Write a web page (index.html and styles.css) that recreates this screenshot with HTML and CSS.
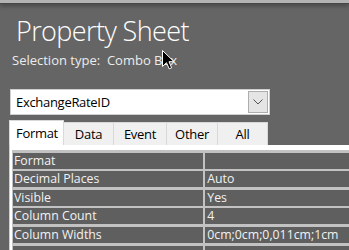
FILE: index.html
```html
<!DOCTYPE html>
<html>
<head>
<meta charset="utf-8">
<link rel="stylesheet" href="styles.css">
</head>
<body>
<div class="topbar"></div>
<header class="head">
  <h1 class="title">Property Sheet</h1>
  <p class="seltype">Selection type:&nbsp; Combo Box</p>
  <svg class="cursor" width="13" height="20" viewBox="0 0 13 20"><path d="M0.5 0.5 L0.5 16.5 L4.5 12.7 L7.2 18.8 L9.6 17.8 L7 11.7 L12 11.7 Z" fill="#000" stroke="#fff" stroke-width="1" stroke-linejoin="miter"/></svg>
</header>
<div class="combo">
  <span class="combo-text">ExchangeRateID</span>
  <span class="combo-btn"><svg width="10" height="6" viewBox="0 0 10 6"><path d="M0.5 0.5 L5 5 L9.5 0.5" fill="none" stroke="#555" stroke-width="1"/></svg></span>
</div>
<nav class="tabs">
  <span class="tab tab-active tab-format">Format</span>
  <span class="tab tab-data">Data</span>
  <span class="tab tab-event">Event</span>
  <span class="tab tab-other">Other</span>
  <span class="tab tab-all">All</span>
</nav>
<section class="panel">
  <div class="grid">
    <div class="cell">Format</div><div class="cell val"></div>
    <div class="cell">Decimal Places</div><div class="cell val">Auto</div>
    <div class="cell">Visible</div><div class="cell val">Yes</div>
    <div class="cell">Column Count</div><div class="cell val">4</div>
    <div class="cell">Column Widths</div><div class="cell val">0cm;0cm;0,011cm;1cm</div>
    <div class="cell"></div><div class="cell val"></div>
  </div>
</section>
</body>
</html>
```
FILE: styles.css
```css
html, body {
  margin: 0;
  padding: 0;
}
body {
  width: 349px;
  height: 250px;
  overflow: hidden;
  background: #656565;
  font-family: "Open Sans", "Noto Sans", sans-serif;
}
.topbar {
  height: 3px;
  background: #b3b3b3;
  border-bottom: 1px solid #474747;
  box-shadow: 0 2px 4px rgba(0,0,0,0.35);
}
.head {
  position: relative;
  padding-top: 11px;
}
.title {
  margin: 0 0 0 16px;
  font-size: 27px;
  font-weight: 300;
  line-height: 32px;
  color: #ffffff;
  letter-spacing: -0.6px;
}
.seltype {
  margin: 5px 0 0 12px;
  font-size: 13px;
  line-height: 16px;
  color: #ececec;
}
.cursor {
  position: absolute;
  left: 162px;
  top: 46px;
}
.combo {
  margin: 21px 0 0 10px;
  width: 260px;
  height: 26px;
  box-sizing: border-box;
  border: 1px solid #cfcfcf;
  background: #fff;
  padding: 1px;
  display: flex;
  align-items: center;
}
.combo-text {
  flex: 1;
  padding-left: 4px;
  font-size: 13px;
  color: #000;
  letter-spacing: -0.3px;
}
.combo-btn {
  width: 20px;
  height: 22px;
  box-sizing: border-box;
  border: 1px solid #adadad;
  background: #e5e5e5;
  display: flex;
  align-items: center;
  justify-content: center;
}
.tabs {
  margin: 5px 0 0 9px;
  height: 25px;
  display: flex;
  align-items: flex-end;
}
.tab {
  box-sizing: border-box;
  height: 23px;
  background: #f0f0f0;
  border: 1px solid #d9d9d9;
  border-bottom: none;
  border-left: none;
  font-size: 13px;
  color: #000;
  display: flex;
  align-items: center;
  justify-content: center;
  letter-spacing: -0.3px;
}
.tab-active {
  height: 25px;
  background: #fff;
  border: 1px solid #d9d9d9;
  border-bottom: none;
  justify-content: flex-start;
  padding-left: 6px;
}
.tab-format { width: 55px; }
.tab-data { width: 50px; }
.tab-event { width: 53px; }
.tab-other { width: 51px; }
.tab-all { width: 50px; }
.panel {
  margin-left: 9px;
  background: #fff;
  border-left: 1px solid #cfcfcf;
  padding: 5px 0 0 2px;
  height: 120px;
}
.grid {
  display: grid;
  grid-template-columns: 190px 1fr;
  grid-auto-rows: 16px;
  column-gap: 2.3px;
  row-gap: 2.6px;
  background: #c2c2c2;
  padding: 2.7px 0 0 1px;
}
.cell {
  background: #5f5f5f;
  color: #f2f2f2;
  font-size: 12.3px;
  line-height: 16px;
  padding-left: 1px;
  white-space: nowrap;
}
.val {
  padding-left: 2px;
}
```
